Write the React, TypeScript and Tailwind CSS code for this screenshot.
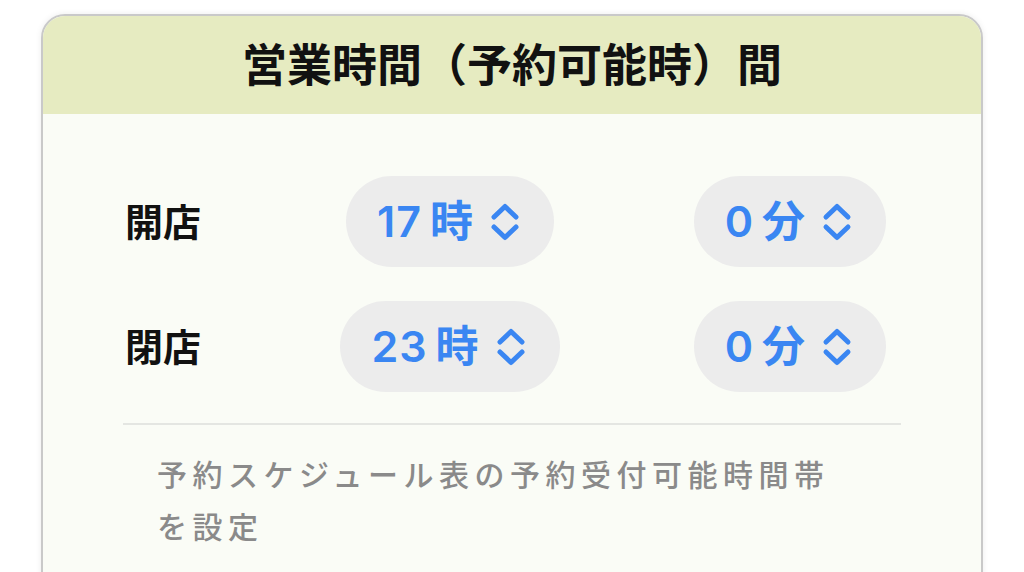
import React from "react";

type Row = { label: string; hour: number; minute: number };

const ROWS: Row[] = [
  { label: "開店", hour: 17, minute: 0 },
  { label: "閉店", hour: 23, minute: 0 },
];

function UpDown() {
  return (
    <svg width="30" height="38" viewBox="0 0 30 38" fill="none" className="shrink-0">
      <path d="M4 14 L15 3.5 L26 14" stroke="#3a86f2" strokeWidth="5" strokeLinecap="round" strokeLinejoin="round" />
      <path d="M4 24 L15 34.5 L26 24" stroke="#3a86f2" strokeWidth="5" strokeLinecap="round" strokeLinejoin="round" />
    </svg>
  );
}

function Picker({ num, unit }: { num: number; unit: string }) {
  return (
    <button className="flex h-[91px] items-center gap-[17px] rounded-full bg-[#ececec] pl-[31px] pr-[34px]">
      <span className="flex items-center gap-[8px] text-[43px] font-semibold leading-none text-[#3a86f2]">
        <span className="tracking-[1px]">{num}</span>
        <span>{unit}</span>
      </span>
      <UpDown />
    </button>
  );
}

export default function App() {
  return (
    <div
      className="h-[572px] w-[1024px] overflow-hidden bg-white pt-[14px]"
      style={{ fontFamily: '"Inter", "Noto Sans CJK JP", sans-serif' }}
    >
      <div className="mx-[41px] h-[600px] overflow-hidden rounded-t-[24px] border-2 border-[#c9c9c9] bg-[#fafcf6] shadow-[0_0_6px_rgba(0,0,0,0.08)]">
        <div className="flex h-[98px] items-center justify-center bg-[#e6ebc1]">
          <h1 className="text-[45px] font-bold leading-none text-[#111]">営業時間（予約可能時）間</h1>
        </div>

        <div className="px-[80px] pt-[62px]">
          <div className="flex flex-col gap-[34px]">
            {ROWS.map((r) => (
              <div key={r.label} className="flex items-center">
                <div className="w-[200px] pl-[2px] text-[38px] font-bold leading-none text-[#111]">{r.label}</div>
                <div className="flex w-[254px] justify-center">
                  <Picker num={r.hour} unit="時" />
                </div>
                <div className="flex flex-1 justify-end pr-[15px]">
                  <Picker num={r.minute} unit="分" />
                </div>
              </div>
            ))}
          </div>

          <div className="mt-[31px] h-[2px] bg-[#e4e6e2]" />

          <p className="mt-[24px] pl-[34px] text-[30px] font-medium leading-[52px] tracking-[5.5px] text-[#8a8a8a]">
            予約スケジュール表の予約受付可能時間帯
            <br />
            を設定
          </p>
        </div>
      </div>
    </div>
  );
}
